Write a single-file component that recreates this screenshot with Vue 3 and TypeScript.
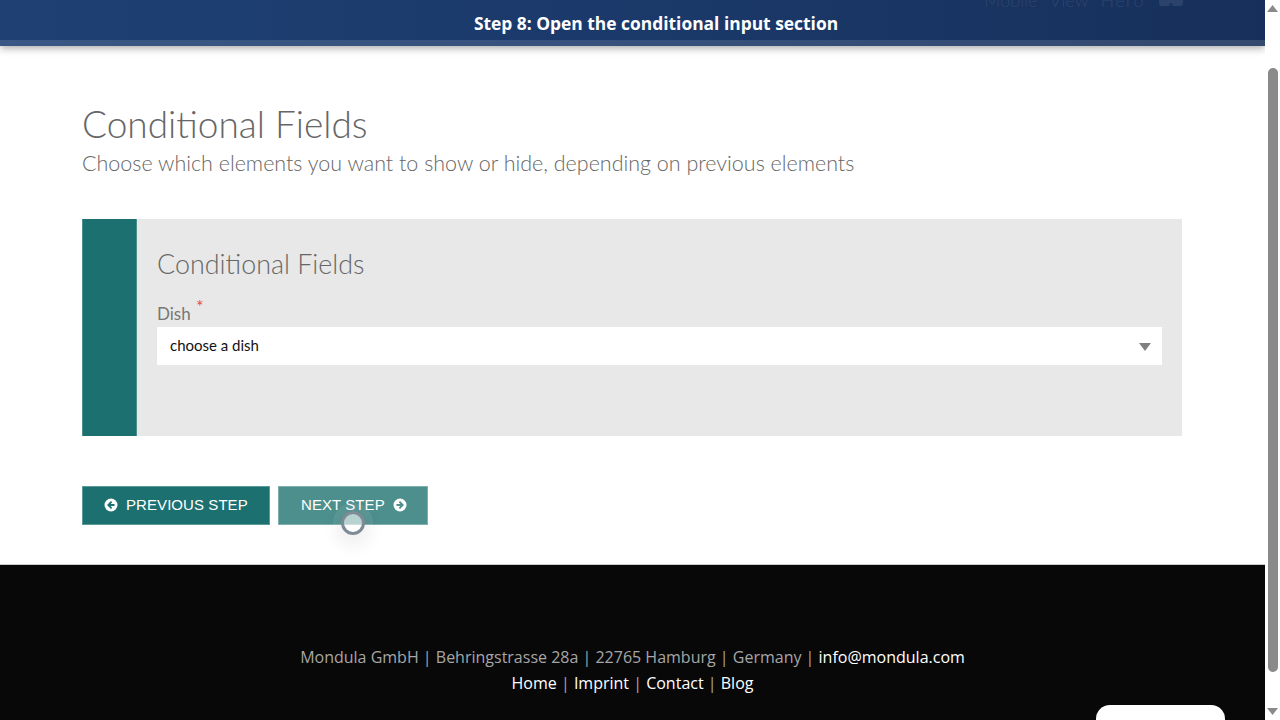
<script setup lang="ts">
const footerLinks: string[] = ['Home', 'Imprint', 'Contact', 'Blog']
</script>

<template>
  <div class="window">
    <div class="page">
      <header class="banner">
        <div class="ghost">
          <span>Mobile</span><span>View</span><span class="ghost-wide">Hero</span>
          <i class="ghost-icon"></i>
        </div>
        <div class="banner-text">Step 8: Open the conditional input section</div>
      </header>

      <main class="content">
        <h1 class="title">Conditional Fields</h1>
        <p class="subtitle">Choose which elements you want to show or hide, depending on previous elements</p>

        <section class="card">
          <div class="card-side"></div>
          <div class="card-body">
            <h2 class="card-title">Conditional Fields</h2>
            <label class="field-label">Dish <sup class="req">*</sup></label>
            <div class="select">
              <span class="select-text">choose a dish</span>
              <svg class="caret" width="12" height="8" viewBox="0 0 12 8"><path d="M0 0h12L6 8z" fill="#808080" /></svg>
            </div>
          </div>
        </section>

        <div class="actions">
          <button class="btn btn-prev" type="button">
            <svg class="btn-icon" width="14" height="14" viewBox="0 0 14 14">
              <circle cx="7" cy="7" r="6.500" fill="#fff" />
              <path d="M7.600 3.700 4.300 7l3.300 3.300M4.500 7H10.500" fill="none" stroke="#1d7070" stroke-width="1.800" />
            </svg>
            <span class="btn-text">PREVIOUS STEP</span>
          </button>
          <div class="next-wrap">
            <button class="btn btn-next" type="button">
              <span class="btn-text">NEXT STEP</span>
              <svg class="btn-icon" width="14" height="14" viewBox="0 0 14 14">
                <circle cx="7" cy="7" r="6.500" fill="#fff" />
                <path d="M6.400 3.700 9.700 7l-3.300 3.300M9.500 7H3.500" fill="none" stroke="#4d8f8d" stroke-width="1.800" />
              </svg>
            </button>
            <span class="cursor"></span>
          </div>
        </div>
      </main>

      <footer class="footer">
        <div class="footer-line">
          Mondula GmbH | Behringstrasse 28a | 22765 Hamburg | Germany | <a class="link">info@mondula.com</a>
        </div>
        <div class="footer-line">
          <template v-for="(l, i) in footerLinks" :key="l">
            <span v-if="i > 0"> | </span><a class="link">{{ l }}</a>
          </template>
        </div>
        <div class="chat"></div>
      </footer>
    </div>

    <aside class="scrollbar">
      <svg width="11" height="7" viewBox="0 0 11 7"><path d="M5.500 0 11 7H0z" fill="#8a8a8a" /></svg>
      <div class="track"><div class="thumb"></div></div>
      <svg width="11" height="7" viewBox="0 0 11 7"><path d="M0 0h11L5.500 7z" fill="#8a8a8a" /></svg>
    </aside>
  </div>
</template>

<style>
html, body { margin: 0; background: #fff; overflow: hidden; }
</style>

<style scoped>
.window {
  width: 1280px;
  height: 720px;
  display: flex;
  overflow: hidden;
  font-family: "Lato", "Open Sans", sans-serif;
}
.page {
  width: 1265px;
  height: 720px;
  display: flex;
  flex-direction: column;
  overflow: hidden;
  position: relative;
}
.banner {
  height: 46px;
  flex: none;
  box-sizing: border-box;
  position: relative;
  z-index: 2;
  background: linear-gradient(90deg, #1e4073 0%, #1b3a6b 45%, #17305b 100%);
  box-shadow: inset 0 -6px 0 rgba(255, 255, 255, 0.12), 0 2px 8px rgba(0, 0, 0, 0.35);
  display: flex;
  justify-content: center;
  overflow: visible;
}
.banner-text {
  margin-top: 10px;
  margin-left: 47px;
  color: #fff;
  font: 700 17.400px/26px "Open Sans", sans-serif;
}
.ghost {
  position: absolute;
  right: 82px;
  top: -12px;
  height: 24px;
  display: flex;
  align-items: center;
  gap: 12px;
  font: 300 18px/24px "Lato", sans-serif;
  color: rgba(255, 255, 255, 0.1);
}
.ghost-wide { letter-spacing: 1.500px; }
.ghost-icon {
  display: block;
  position: relative;
  align-self: flex-start;
  width: 24px;
  height: 18px;
  border-radius: 3px;
  margin-left: 2px;
  background: rgba(255, 255, 255, 0.09);
}
.ghost-icon::after {
  content: "";
  position: absolute;
  left: 10px;
  bottom: 0;
  width: 4px;
  height: 3px;
  border-radius: 2px 2px 0 0;
  background: #1c3560;
}
.content {
  flex: none;
  height: 518px;
  box-sizing: border-box;
  padding: 0 83px 0 82px;
  background: #fff;
}
.title {
  margin: 56px 0 0;
  font: 300 37px/44px "Lato", sans-serif;
  color: #666;
}
.subtitle {
  margin: 0;
  font: 300 21.470px/34px "Lato", sans-serif;
  color: #666;
}
.card {
  margin-top: 39px;
  height: 217px;
  display: flex;
  background: #e8e8e8;
}
.card-side {
  width: 55px;
  flex: none;
  box-sizing: border-box;
  background: #1d7070;
  border-left: 1px solid #4d8f8d;
  border-right: 1px solid #4d8f8d;
}
.card-body {
  flex: 1;
  box-sizing: border-box;
  padding: 29px 20px 0;
  display: flex;
  flex-direction: column;
}
.card-title {
  margin: 0;
  font: 300 26.900px/32px "Lato", sans-serif;
  color: #666;
}
.field-label {
  margin-top: 21px;
  font: 400 17px/26px "Lato", sans-serif;
  color: #777;
  height: 26px;
}
.req {
  color: #e8503a;
  font-size: 18px;
  line-height: 0;
  margin-left: 1px;
}
.select {
  height: 38px;
  background: #fff;
  display: flex;
  align-items: center;
  justify-content: space-between;
  padding: 0 11px 0 13px;
  font: 400 15px/20px "Lato", sans-serif;
  color: #111;
}
.select-text { margin-bottom: 2px; }
.caret { margin-top: 1px; }
.actions {
  margin-top: 50px;
  display: flex;
  gap: 8px;
}
.btn {
  height: 39px;
  box-sizing: border-box;
  display: flex;
  align-items: center;
  gap: 8px;
  padding: 0 21px;
  border: 1px solid #4d8f8d;
  color: #fff;
  white-space: nowrap;
  font: 400 15px/20px "Liberation Sans", Arial, sans-serif;
  letter-spacing: 0.07px;
}
.btn-text { margin-bottom: 2px; }
.btn-icon { flex: none; margin-bottom: 2px; }
.btn-prev { background: #1d7070; width: 188px; border-color: #5b9a98; }
.btn-next { background: #4d8f8d; width: 150px; border-color: #7fb0ae; padding-left: 22px; gap: 8px; }
.next-wrap { position: relative; }
.cursor {
  position: absolute;
  left: 63px;
  top: 25px;
  width: 24px;
  height: 24px;
  box-sizing: border-box;
  border-radius: 50%;
  border: 3px solid #7e8a96;
  background: rgba(255, 255, 255, 0.6);
  box-shadow: 0 6px 16px 6px rgba(0, 0, 0, 0.06), 0 0 0 8px rgba(255, 255, 255, 0.08);
}
.footer {
  flex: 1;
  position: relative;
  background: #080808;
  border-top: 1px solid #ccc;
  box-sizing: border-box;
  padding-top: 79px;
  color: #a6a6a6;
  text-align: center;
  font: 400 16px/26px "Open Sans", sans-serif;
}
.link { color: #fff; font-weight: 500; }
.chat {
  position: absolute;
  left: 1096px;
  top: 140px;
  width: 129px;
  height: 40px;
  background: #fff;
  border-radius: 14px 14px 0 0;
}
.scrollbar {
  width: 15px;
  height: 720px;
  flex: none;
  background: #fff;
  display: flex;
  flex-direction: column;
  align-items: center;
  justify-content: space-between;
  padding: 5px 0;
  box-sizing: border-box;
}
.track {
  flex: 1;
  width: 100%;
  padding: 56px 2px 0 3px;
  box-sizing: border-box;
  display: flex;
  flex-direction: column;
}
.thumb {
  width: 10px;
  height: 604px;
  background: #8a8a8a;
  border-radius: 5px;
}
</style>
